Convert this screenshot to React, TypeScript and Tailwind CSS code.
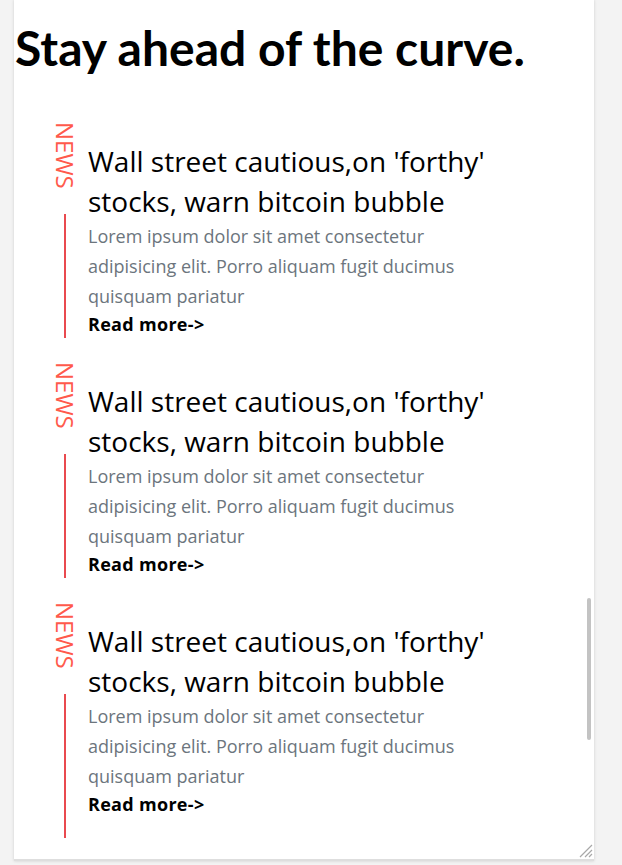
const items = [1, 2, 3];

const NewsItem = ({ last }: { last?: boolean }) => {
  return (
    <div className="flex gap-[11px]">
      <div className="flex w-[24px] shrink-0 flex-col items-center">
        <span className="text-[24px] leading-[24px] text-[#ff5a4c] [writing-mode:vertical-rl]">
          NEWS
        </span>
        <div className="mt-[25px] w-[2px] flex-1 bg-[#e94a4f]" />
      </div>
      <div className={`w-[420px] pt-[19px] ${last ? "pb-[20px]" : ""}`}>
        <h2 className="text-[28px] leading-[40px] text-black">
          Wall street cautious,on 'forthy' stocks, warn bitcoin bubble
        </h2>
        <p className="text-[18px] leading-[30px] text-[#6c757d]">
          Lorem ipsum dolor sit amet consectetur adipisicing elit. Porro aliquam fugit ducimus
          quisquam pariatur
        </p>
        <a className="block text-[18px] font-bold leading-[27px] tracking-[0.3px] text-black">
          Read more-&gt;
        </a>
      </div>
    </div>
  );
};

export default function App() {
  return (
    <div className="min-h-[865px] bg-[#f3f3f3] font-['Segoe_UI','Open_Sans',sans-serif]">
      <div className="relative ml-[14px] h-[861px] w-[580px] overflow-hidden border-b-[2px] border-[#dedede] bg-white shadow-[0_0_3px_rgba(0,0,0,0.15)]">
        <h1 className="pl-[1px] pt-[19px] font-['Segoe_UI','Lato',sans-serif] text-[48px] font-bold leading-[58px] text-black">
          Stay ahead of the curve.
        </h1>
        <div className="mt-[45px] flex flex-col gap-[24px] pl-[39px]">
          {items.map((i) => (
            <NewsItem key={i} last={i === 3} />
          ))}
        </div>
        {/* scrollbar thumb */}
        <div className="absolute right-[3px] top-[598px] h-[142px] w-[4px] rounded-full bg-[#c3c3c3]" />
        {/* resize grip */}
        <svg className="absolute bottom-[1px] right-[1px]" width="16" height="16" viewBox="0 0 16 16">
          <path d="M15 3 L3 15 M15 8 L8 15 M15 12 L12 15" stroke="#a8a8a8" strokeWidth="1.2" />
        </svg>
      </div>
    </div>
  );
}
